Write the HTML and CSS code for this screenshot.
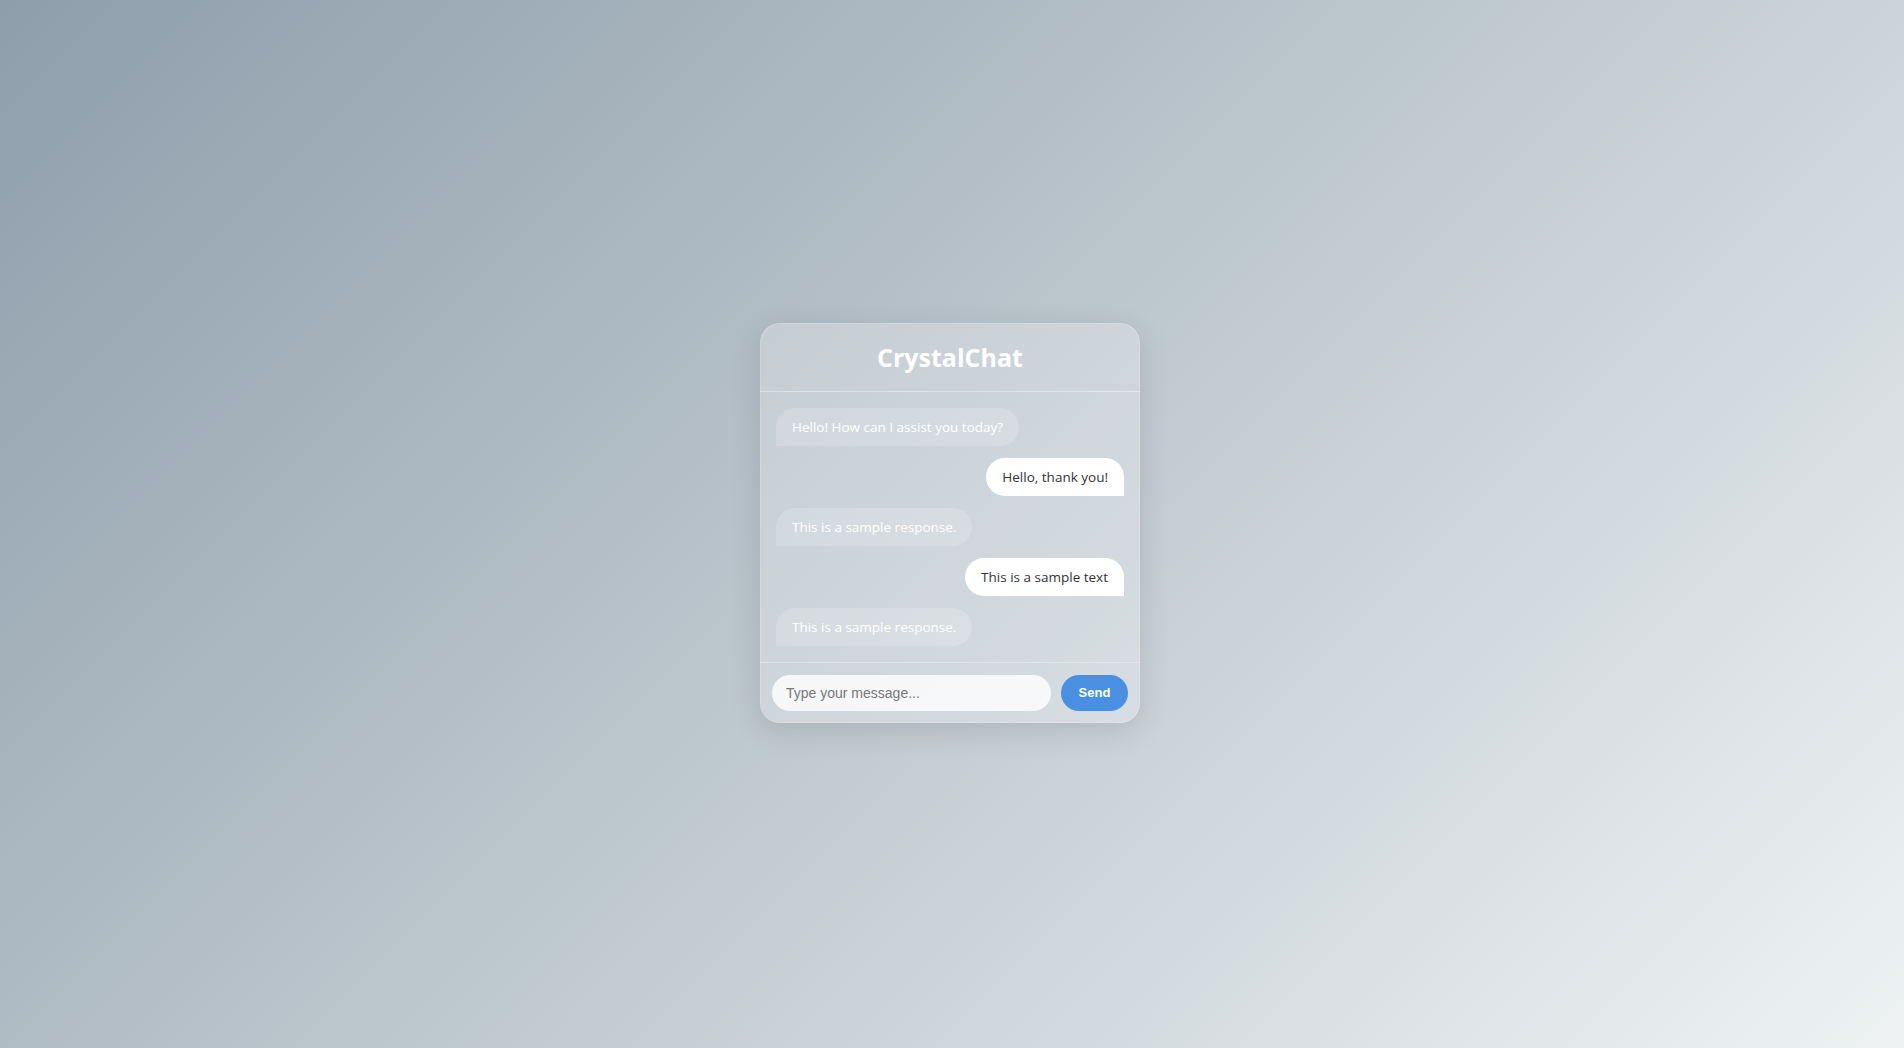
FILE: index.html
```html
<!DOCTYPE html>
<html lang="en">
<head>
<meta charset="utf-8">
<title>CrystalChat</title>
<link rel="stylesheet" href="styles.css">
</head>
<body>
<div class="chat">
  <header class="chat-header">
    <h1 class="chat-title">CrystalChat</h1>
  </header>
  <div class="chat-messages">
    <div class="msg msg-bot">Hello! How can I assist you today?</div>
    <div class="msg msg-user">Hello, thank you!</div>
    <div class="msg msg-bot">This is a sample response.</div>
    <div class="msg msg-user">This is a sample text</div>
    <div class="msg msg-bot">This is a sample response.</div>
  </div>
  <div class="chat-input">
    <input class="input-field" type="text" placeholder="Type your message...">
    <button class="send-btn">Send</button>
  </div>
</div>
</body>
</html>
```

FILE: styles.css
```css
* { box-sizing: border-box; }
html, body { height: 100%; }
body {
  margin: 0;
  padding: 0 4px 3px 0;
  font-family: "Open Sans", "Noto Sans", sans-serif;
  background: linear-gradient(135deg, #8e9eab 0%, #eef2f3 100%);
  display: flex;
  align-items: center;
  justify-content: center;
}
.chat {
  width: 380px;
  display: flex;
  flex-direction: column;
  background: rgba(255, 255, 255, 0.25);
  border-radius: 20px;
  box-shadow: 0 8px 32px rgba(0, 0, 0, 0.12), inset 0 0 0 1px rgba(255, 255, 255, 0.18);
  overflow: hidden;
}
.chat-header {
  padding: 21px 20px 20px;
  text-align: center;
  border-bottom: 1px solid rgba(255, 255, 255, 0.4);
}
.chat-title {
  margin: 0;
  font-size: 25px;
  line-height: 27px;
  font-weight: 700;
  color: #fff;
}
.chat-messages {
  padding: 16px;
  display: flex;
  flex-direction: column;
  gap: 12px;
}
.msg {
  padding: 10px 16px;
  font-size: 13.5px;
  line-height: 18px;
  font-weight: 500;
  max-width: 80%;
}
.msg-bot {
  align-self: flex-start;
  background: rgba(255, 255, 255, 0.18);
  color: #fff;
  border-radius: 20px 20px 20px 0;
}
.msg-user {
  align-self: flex-end;
  background: #fff;
  color: #333;
  border-radius: 20px 20px 0 20px;
}
.chat-input {
  display: flex;
  gap: 10px;
  padding: 12px;
  border-top: 1px solid rgba(255, 255, 255, 0.3);
}
.input-field {
  flex: 1;
  height: 36px;
  border: none;
  outline: none;
  border-radius: 18px;
  padding: 0 14px;
  background: rgba(255, 255, 255, 0.8);
  font-family: "Liberation Sans", Arial, sans-serif;
  font-size: 14px;
  color: #333;
}
.input-field::placeholder { color: #777; }
.send-btn {
  width: 67px;
  height: 36px;
  border: none;
  border-radius: 18px;
  background: #4a90e2;
  color: #fff;
  font-family: "Liberation Sans", Arial, sans-serif;
  font-size: 13px;
  font-weight: 700;
}
```
